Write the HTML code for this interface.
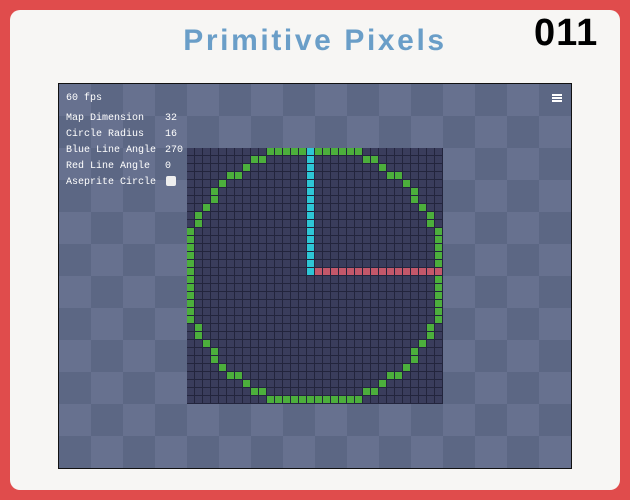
<!DOCTYPE html><html><head><style>
body{margin:0;width:630px;height:500px;background:#e04c4c;overflow:hidden;font-family:"Liberation Sans",sans-serif}
.card{position:absolute;left:10px;top:10px;width:610px;height:480px;background:#f7f6f4;border-radius:10px}
h1{position:absolute;left:0;width:630px;top:24px;margin:0;text-align:center;font-size:30px;font-weight:bold;color:#6a9ec8;letter-spacing:2.6px}
.num{position:absolute;left:534px;top:12px;font-size:38px;font-weight:bold;color:#000;letter-spacing:1px}
.cv{position:absolute;left:58px;top:83px;width:512px;height:384px;border:1px solid #111;
background-color:#5c6784;background-image:linear-gradient(45deg,#67718f 25%,transparent 25%,transparent 75%,#67718f 75%),linear-gradient(45deg,#67718f 25%,transparent 25%,transparent 75%,#67718f 75%);background-size:64px 64px;background-position:32px 0,0 32px;overflow:hidden}
.t{position:absolute;color:#fff;font-family:"Liberation Mono",monospace;font-size:10px;white-space:pre}
.cb{position:absolute;left:107px;top:92px;width:10px;height:10px;background:#eee;border-radius:2px}
.grid{position:absolute;left:128px;top:64px;width:256px;height:256px;background:#23253d}
.grid div{position:absolute;width:7px;height:7px}
.hb{position:absolute;left:493px;top:10px;width:10px;height:2px;background:#fff;box-shadow:0 3px 0 #fff,0 6px 0 #fff}
</style></head><body>
<div class="card"></div>
<h1>Primitive Pixels</h1>
<div class="num">011</div>
<div class="cv">
<div class="grid" id="g"></div>
<div class="t" style="left:7px;top:9px">60 fps</div>
<div class="t" style="left:7px;top:29px">Map Dimension</div><div class="t" style="left:106px;top:29px">32</div>
<div class="t" style="left:7px;top:45px">Circle Radius</div><div class="t" style="left:106px;top:45px">16</div>
<div class="t" style="left:7px;top:61px">Blue Line Angle</div><div class="t" style="left:106px;top:61px">270</div>
<div class="t" style="left:7px;top:77px">Red Line Angle</div><div class="t" style="left:106px;top:77px">0</div>
<div class="t" style="left:7px;top:93px">Aseprite Circle</div>
<div class="cb"></div>
<div class="hb"></div>
</div>
<script>
var g=document.getElementById('g'),m={};
function s(c,r,col){m[c+','+r]=col}
for(var dx=0;dx<16;dx++){var a=dx+.5,b=Math.sqrt(256-a*a);var o=Math.round(b-.5)+.5;if(o<a)continue;
[[a,o],[o,a]].forEach(function(p){[[1,1],[1,-1],[-1,1],[-1,-1]].forEach(function(q){s(16+q[0]*p[0]-.5,16+q[1]*p[1]-.5,'#4caf3c')})})}
for(var r=0;r<16;r++)s(15,r,'#2ec6d6');
for(var c=16;c<32;c++)s(c,15,'#c4586a');
var h='';for(var r=0;r<32;r++)for(var c=0;c<32;c++){h+='<div style="left:'+(c*8)+'px;top:'+(r*8)+'px;background:'+(m[c+','+r]||'#3a3d5c')+'"></div>'}
g.innerHTML=h;
</script>
</body></html>
